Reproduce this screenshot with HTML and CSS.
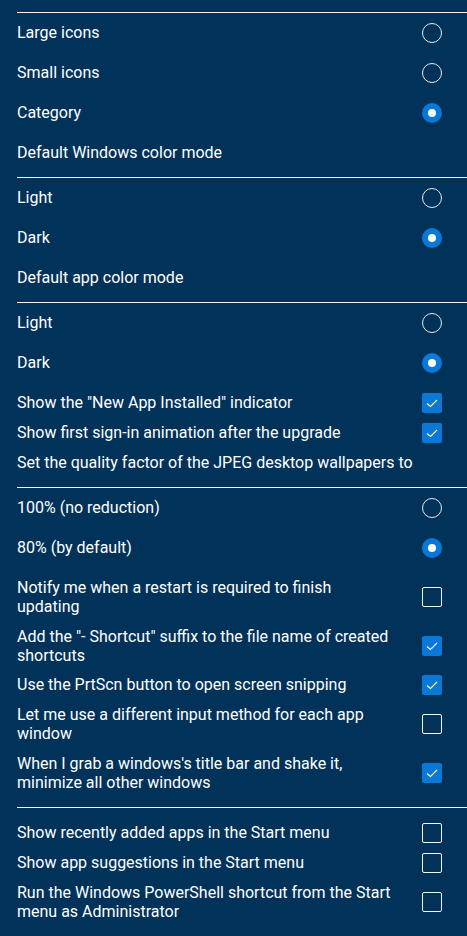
FILE: index.html
```html
<!DOCTYPE html>
<html lang="en">
<head>
<meta charset="utf-8">
<title>Settings</title>
<link rel="stylesheet" href="styles.css">
</head>
<body>
<main class="panel">
  <div class="sep"></div>
  <div class="group radios">
    <div class="row radio-row"><span class="label">Large icons</span><span class="radio"></span></div>
    <div class="row radio-row"><span class="label">Small icons</span><span class="radio"></span></div>
    <div class="row radio-row"><span class="label">Category</span><span class="radio on"></span></div>
  </div>
  <div class="heading">Default Windows color mode</div>
  <div class="sep"></div>
  <div class="group radios">
    <div class="row radio-row"><span class="label">Light</span><span class="radio"></span></div>
    <div class="row radio-row"><span class="label">Dark</span><span class="radio on"></span></div>
  </div>
  <div class="heading">Default app color mode</div>
  <div class="sep"></div>
  <div class="group radios">
    <div class="row radio-row"><span class="label">Light</span><span class="radio"></span></div>
    <div class="row radio-row"><span class="label">Dark</span><span class="radio on"></span></div>
  </div>
  <div class="group checks">
    <div class="row check-row"><span class="label">Show the "New App Installed" indicator</span><span class="check on"><svg viewBox="0 0 20 20"><polyline points="5,10.5 8.5,13.5 15,7"/></svg></span></div>
    <div class="row check-row"><span class="label">Show first sign-in animation after the upgrade</span><span class="check on"><svg viewBox="0 0 20 20"><polyline points="5,10.5 8.5,13.5 15,7"/></svg></span></div>
  </div>
  <div class="heading">Set the quality factor of the JPEG desktop wallpapers to</div>
  <div class="sep"></div>
  <div class="group radios">
    <div class="row radio-row"><span class="label">100% (no reduction)</span><span class="radio"></span></div>
    <div class="row radio-row"><span class="label">80% (by default)</span><span class="radio on"></span></div>
  </div>
  <div class="group checks before-sep">
    <div class="row check-row"><span class="label">Notify me when a restart is required to finish updating</span><span class="check"></span></div>
    <div class="row check-row"><span class="label">Add the "- Shortcut" suffix to the file name of created shortcuts</span><span class="check on"><svg viewBox="0 0 20 20"><polyline points="5,10.5 8.5,13.5 15,7"/></svg></span></div>
    <div class="row check-row"><span class="label">Use the PrtScn button to open screen snipping</span><span class="check on"><svg viewBox="0 0 20 20"><polyline points="5,10.5 8.5,13.5 15,7"/></svg></span></div>
    <div class="row check-row"><span class="label">Let me use a different input method for each app window</span><span class="check"></span></div>
    <div class="row check-row"><span class="label">When I grab a windows's title bar and shake it, minimize all other windows</span><span class="check on"><svg viewBox="0 0 20 20"><polyline points="5,10.5 8.5,13.5 15,7"/></svg></span></div>
  </div>
  <div class="sep"></div>
  <div class="group checks after-sep">
    <div class="row check-row"><span class="label">Show recently added apps in the Start menu</span><span class="check"></span></div>
    <div class="row check-row"><span class="label">Show app suggestions in the Start menu</span><span class="check"></span></div>
    <div class="row check-row"><span class="label">Run the Windows PowerShell shortcut from the Start menu as Administrator</span><span class="check"></span></div>
  </div>
</main>
</body>
</html>
```

FILE: styles.css
```css
* { box-sizing: border-box; }

html, body {
  margin: 0;
  background: #01325a;
}

body {
  font-family: Roboto, "Liberation Sans", sans-serif;
  font-size: 16px;
  line-height: 18.75px;
  color: #ffffff;
  min-height: 936px;
}

.panel {
  display: flex;
  flex-direction: column;
  padding-top: 12px;
}

.sep {
  height: 1px;
  margin-left: 17px;
  background: #f2f4f7;
}

.group {
  display: flex;
  flex-direction: column;
}

.radios { padding-bottom: 5px; }
.before-sep { padding-bottom: 10px; }
.after-sep { padding-top: 10px; }

.row {
  display: flex;
  align-items: center;
  gap: 30px;
  padding: 0 25px 0 17px;
}

.label { flex: 1; }

.radio-row { height: 40px; }

.check-row {
  min-height: 30px;
  padding-top: 5px;
  padding-bottom: 5px;
  line-height: 19.25px;
}

.heading {
  height: 30px;
  display: flex;
  align-items: center;
  padding-left: 17px;
  margin-bottom: 9px;
}

.radio {
  flex: none;
  width: 20px;
  height: 20px;
  border-radius: 50%;
  border: 1px solid #e8ecf1;
  display: flex;
  align-items: center;
  justify-content: center;
}

.radio.on {
  border: none;
  background: #0a78d6;
}

.radio.on::after {
  content: "";
  width: 8px;
  height: 8px;
  border-radius: 50%;
  background: #ffffff;
}

.check {
  flex: none;
  width: 20px;
  height: 20px;
  border: 1.5px solid #f4f6f8;
  border-radius: 2px;
}

.check.on {
  border: none;
  background: #0a78d6;
}

.check svg {
  display: block;
  width: 20px;
  height: 20px;
  fill: none;
  stroke: #ffffff;
  stroke-width: 1.1;
}
```
